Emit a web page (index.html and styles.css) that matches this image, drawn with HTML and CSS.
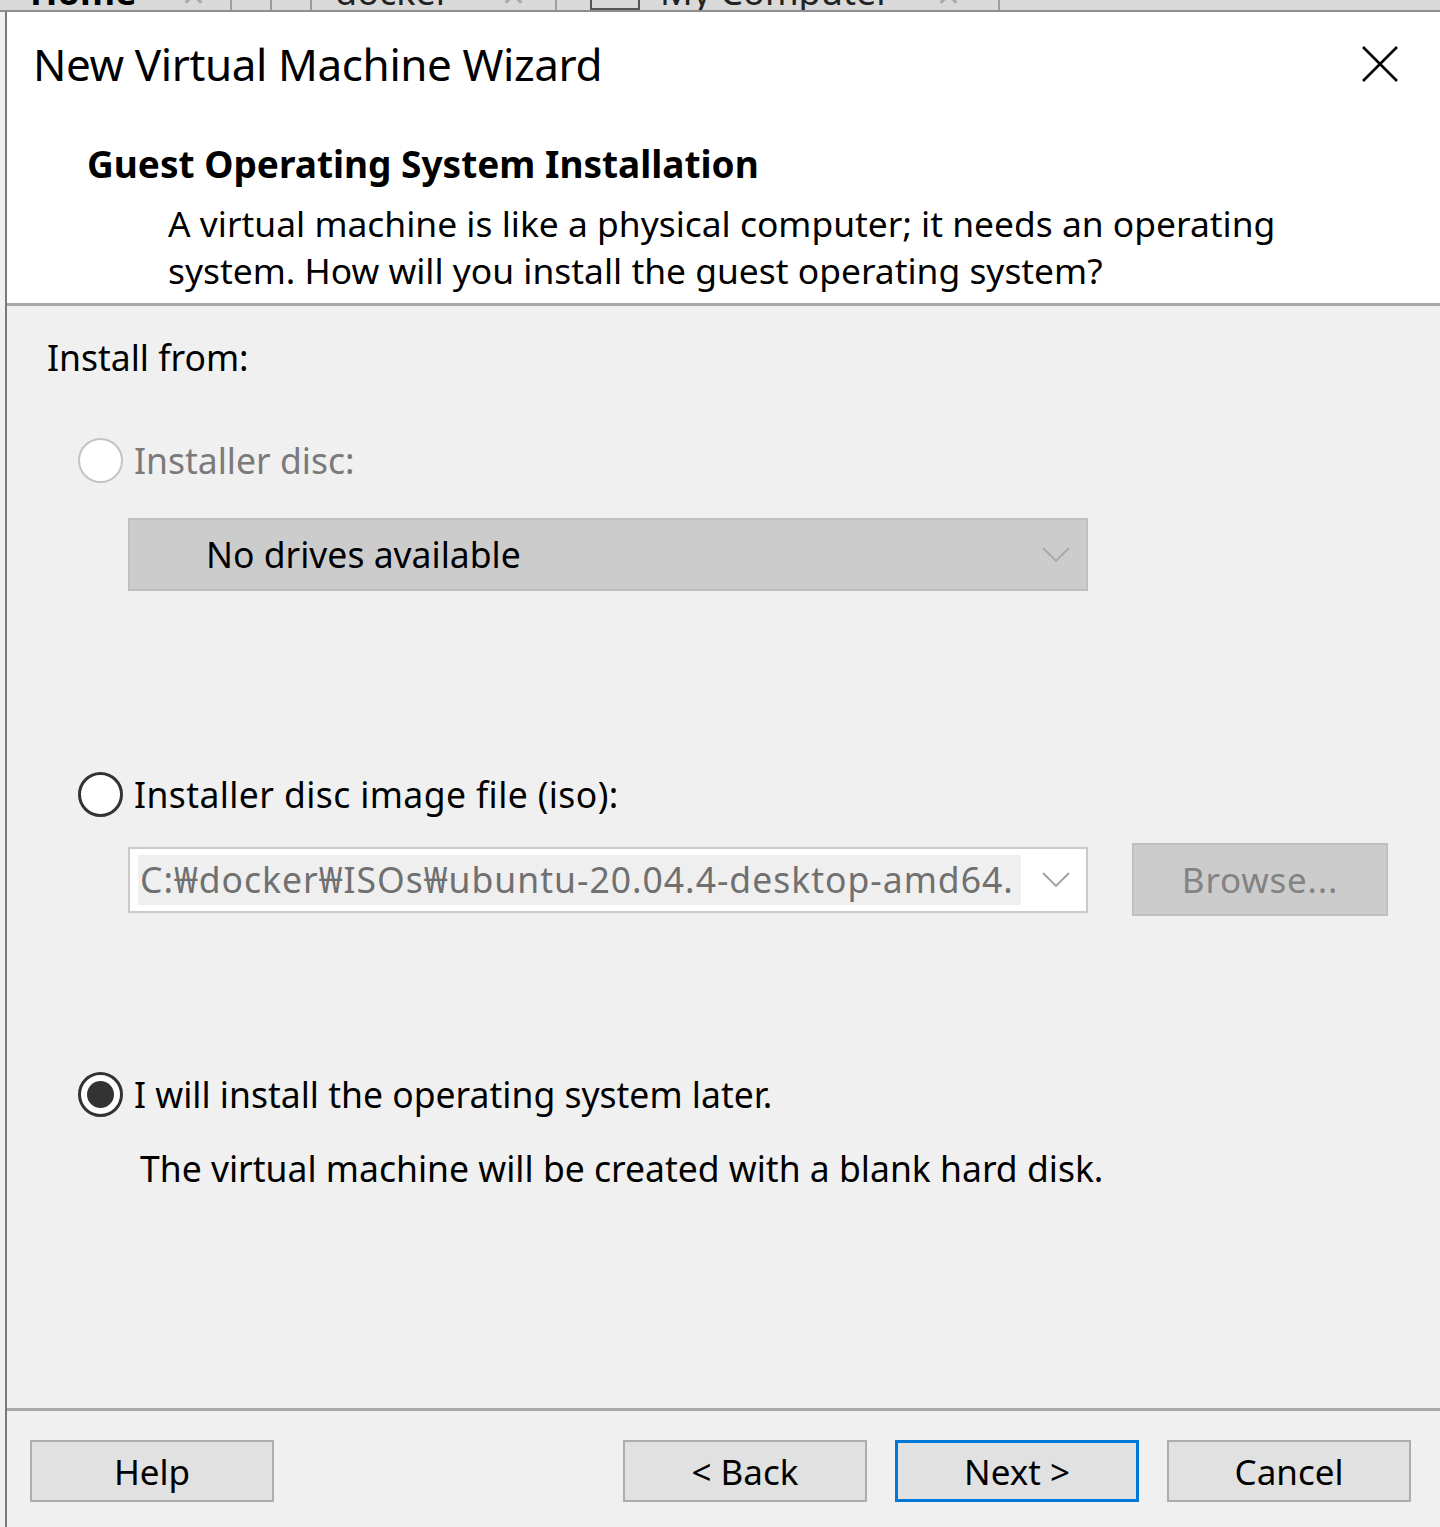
FILE: index.html
```html
<!DOCTYPE html>
<html>
<head>
	<title>New Virtual Machine Wizard</title>
	<link rel="stylesheet" href="styles.css">
</head>
<body>
	<div class="tabs">
		<div class="tab tab-home"><span>Home</span><span class="tab-x">×</span></div>
		<div class="tab-icon"><span class="tab-line"></span></div>
		<div class="tab tab-docker"><span>docker</span><span class="tab-x">×</span></div>
		<div class="tab-icon tab-icon-pc"><span class="tab-box"></span></div>
		<div class="tab tab-pc"><span>My Computer</span><span class="tab-x">×</span></div>
	</div>
	<div class="dialog">
		<div class="header">
			<div class="titlebar">
				<span class="title">New Virtual Machine Wizard</span>
				<svg class="close" width="38" height="38" viewBox="0 0 38 38">
					<path d="M2 2 L36 36 M36 2 L2 36" stroke="#000" stroke-width="2.6" fill="none"/>
				</svg>
			</div>
			<div class="heading">Guest Operating System Installation</div>
			<p class="desc">A virtual machine is like a physical computer; it needs an operating<br>system. How will you install the guest operating system?</p>
		</div>
		<div class="body">
			<div class="label">Install from:</div>

			<div class="option disabled"><span class="radio"></span>Installer disc:</div>
			<div class="select disabled">
				<span>No drives available</span>
				<svg class="chevron" width="28" height="16" viewBox="0 0 28 16">
					<path d="M1 1 L14 14 L27 1" stroke="#a8a8a8" stroke-width="1.8" fill="none"/>
				</svg>
			</div>

			<div class="option option-iso"><span class="radio"></span>Installer disc image file (iso):</div>
			<div class="file-row">
				<div class="combo">
					<span class="combo-text">C:₩docker₩ISOs₩ubuntu-20.04.4-desktop-amd64.</span>
					<svg class="chevron" width="28" height="16" viewBox="0 0 28 16">
						<path d="M1 1 L14 14 L27 1" stroke="#a0a0a0" stroke-width="1.8" fill="none"/>
					</svg>
				</div>
				<button type="button" class="btn btn-browse">Browse...</button>
			</div>

			<div class="option option-later"><span class="radio checked"></span>I will install the operating system later.</div>
			<div class="note">The virtual machine will be created with a blank hard disk.</div>
		</div>
		<div class="footer">
			<button type="button" class="btn">Help</button>
			<div class="footer-right">
				<button type="button" class="btn">&lt; Back</button>
				<button type="button" class="btn btn-default">Next &gt;</button>
				<button type="button" class="btn">Cancel</button>
			</div>
		</div>
	</div>
</body>
</html>
```

FILE: styles.css
```css
body {
	margin: 0;
	background-color: #f0f0f0;
	font-family: "Noto Sans", "Open Sans", sans-serif;
	color: #000000;
	overflow: hidden;
}
.tabs {
	display: flex;
	align-items: flex-end;
	height: 10px;
	overflow: hidden;
	background-color: #d9d9d9;
	border-bottom: 2px solid #8e8e8e;
	font-size: 36px;
	line-height: 1;
}
.tab {
	box-sizing: border-box;
	display: flex;
	justify-content: space-between;
	margin-bottom: -4px;
	color: #222222;
}
.tab-home {
	width: 230px;
	padding: 0 25px 0 30px;
	font-weight: bold;
	color: #000000;
}
.tab-docker {
	width: 243px;
	padding: 0 30px 0 23px;
}
.tab-pc {
	width: 350px;
	padding: 0 38px 0 10px;
	border-right: 2px solid #a0a0a0;
}
.tab-x {
	color: #a8a8a8;
	font-weight: normal;
	font-size: 40px;
}
.tab-icon {
	box-sizing: border-box;
	width: 82px;
	height: 10px;
	border-left: 2px solid #a0a0a0;
	border-right: 2px solid #9a9a9a;
	display: flex;
	justify-content: center;
}
.tab-line {
	width: 2px;
	height: 10px;
	background-color: #9a9a9a;
}
.tab-icon-pc {
	width: 95px;
	border-right: none;
	justify-content: flex-start;
	padding-left: 33px;
}
.tab-box {
	width: 46px;
	height: 8px;
	border: 2px solid #555555;
	border-top: none;
}
.dialog {
	margin-left: 5px;
	border-left: 2px solid #7a7a7a;
	height: 1515px;
	display: flex;
	flex-direction: column;
}
.header {
	background-color: #ffffff;
	padding: 22px 0 9px 26px;
	border-bottom: 3px solid #a9a9a9;
}
.titlebar {
	display: flex;
	align-items: center;
	justify-content: space-between;
	padding-right: 41px;
}
.title {
	font-size: 44px;
	line-height: 60px;
	letter-spacing: -0.4px;
}
.heading {
	margin: 46px 0 0 54px;
	font-size: 37px;
	line-height: 48px;
	font-weight: bold;
}
.desc {
	margin: 12px 0 0 135px;
	font-size: 35.4px;
	line-height: 47px;
}
.body {
	flex: 1;
	padding: 28px 0 0 40px;
	border-bottom: 3px solid #a9a9a9;
	font-size: 35.5px;
	line-height: 47px;
}
.option {
	display: flex;
	align-items: center;
	margin: 56px 0 0 31px;
}
.option.disabled {
	color: #7a7a7a;
}
.option-iso {
	margin-top: 180px;
	letter-spacing: 0.4px;
}
.option-later {
	margin-top: 155px;
}
.radio {
	box-sizing: border-box;
	width: 45px;
	height: 45px;
	margin-right: 11px;
	border-radius: 50%;
	border: 3px solid #333333;
	background-color: #ffffff;
	position: relative;
}
.option.disabled .radio {
	border: 2px solid #c4c4c4;
}
.radio.checked::after {
	content: "";
	position: absolute;
	top: 6px;
	left: 6px;
	width: 27px;
	height: 27px;
	border-radius: 50%;
	background-color: #333333;
}
.select {
	box-sizing: border-box;
	display: flex;
	align-items: center;
	justify-content: space-between;
	width: 960px;
	height: 73px;
	margin: 34px 0 0 81px;
	padding: 0 16px 0 76px;
	background-color: #cccccc;
	border: 2px solid #bfbfbf;
}
.file-row {
	display: flex;
	align-items: center;
	margin: 25px 0 0 81px;
}
.combo {
	box-sizing: border-box;
	display: flex;
	align-items: center;
	justify-content: space-between;
	width: 960px;
	height: 66px;
	padding: 6px 16px 6px 8px;
	background-color: #ffffff;
	border: 2px solid #cacaca;
}
.combo-text {
	align-self: stretch;
	display: flex;
	align-items: center;
	width: 881px;
	padding-left: 2px;
	background-color: #efefef;
	color: #707070;
	letter-spacing: 1px;
	white-space: nowrap;
	overflow: hidden;
}
.btn {
	box-sizing: border-box;
	width: 244px;
	height: 62px;
	padding: 0;
	background-color: #e1e1e1;
	border: 2px solid #adadad;
	font-family: inherit;
	font-size: 35px;
	color: #000000;
}
.btn-browse {
	width: 256px;
	height: 73px;
	margin-left: 44px;
	background-color: #cccccc;
	border-color: #bfbfbf;
	color: #838383;
	letter-spacing: 0.8px;
}
.btn-default {
	border: 3px solid #0078d7;
}
.note {
	margin: 27px 0 0 93px;
}
.footer {
	display: flex;
	justify-content: space-between;
	height: 116px;
	padding: 29px 29px 0 23px;
	box-sizing: border-box;
}
.footer-right {
	display: flex;
	gap: 28px;
}
```
